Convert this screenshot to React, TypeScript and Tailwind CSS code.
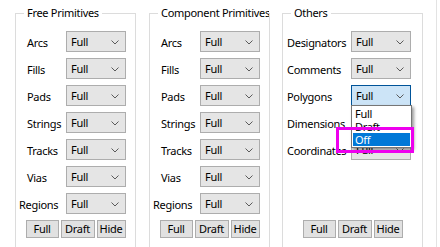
import React from "react";

function Chevron() {
  return (
    <svg width="8" height="5" viewBox="0 0 8 5" className="absolute right-[6px] top-[8px]">
      <path d="M0.5 0.5 L4 4 L7.5 0.5" fill="none" stroke="#5a5a5a" strokeWidth="1" />
    </svg>
  );
}

function Combo({ focused = false, children }: { focused?: boolean; children?: React.ReactNode }) {
  return (
    <div
      className={
        focused
          ? "relative w-[60px] h-[21px] border border-[#005499] bg-[#cce4f7] pl-[4px] leading-[19px] z-10"
          : "relative w-[60px] h-[21px] border border-[#adadad] bg-[#e5e5e5] pl-[4px] leading-[19px]"
      }
    >
      Full
      <Chevron />
      {children}
    </div>
  );
}

function Row({ label, labelCls, colW, focused, children }: { label: string; labelCls: string; colW: string; focused?: boolean; children?: React.ReactNode }) {
  return (
    <div className="flex items-center h-[21px]">
      <div className={`${colW} shrink-0 whitespace-nowrap pt-[3px] ${labelCls}`}>{label}</div>
      <Combo focused={focused}>{children}</Combo>
    </div>
  );
}

function Buttons() {
  return (
    <div className="flex justify-center gap-[2px] mt-[6px]">
      <div className="w-[33px] h-[18px] border border-[#adadad] bg-[#e1e1e1] text-center leading-[16px]">Full</div>
      <div className="w-[34px] h-[18px] border border-[#adadad] bg-[#e1e1e1] text-center leading-[16px]">Draft</div>
      <div className="w-[29px] h-[18px] border border-[#adadad] bg-[#e1e1e1] text-center leading-[16px]">Hide</div>
    </div>
  );
}

function GroupBox({ title, widthCls, children }: { title: string; widthCls: string; children: React.ReactNode }) {
  return (
    <div className={`relative shrink-0 h-[260px] border border-[#dcdcdc] ${widthCls}`}>
      <div className="absolute -top-[9px] left-[8px] right-0 overflow-hidden whitespace-nowrap leading-[16px]">
        <span className="bg-white px-[3px]">{title}</span>
      </div>
      <div className="pt-[17px]">{children}</div>
    </div>
  );
}

const prim = ["Arcs", "Fills", "Pads", "Strings", "Tracks", "Vias", "Regions"];

function PrimGroup({ title }: { title: string }) {
  return (
    <GroupBox title={title} widthCls="w-[121px]">
      <div className="h-[183px] flex flex-col gap-[6px]">
        {prim.map((p) => (
          <Row key={p} label={p} colW="w-[50px]" labelCls={p === "Regions" ? "pl-[3px]" : "pl-[11px]"} />
        ))}
      </div>
      <Buttons />
    </GroupBox>
  );
}

export default function App() {
  return (
    <div className="relative w-[440px] h-[247px] overflow-hidden bg-white text-black text-[11px] tracking-[-0.3px] font-['Noto_Sans',sans-serif]">
      <div className="w-[437px] h-[247px] border-r border-[#e3e3e3] flex pl-[15px] pt-[13px]">
        <PrimGroup title="Free Primitives" />
        <div className="w-[13px] shrink-0" />
        <PrimGroup title="Component Primitives" />
        <div className="w-[12px] shrink-0" />
        <GroupBox title="Others" widthCls="w-[141px]">
          <div className="h-[183px] flex flex-col gap-[6px]">
            <Row label="Designators" colW="w-[68px]" labelCls="pl-[4px]" />
            <Row label="Comments" colW="w-[68px]" labelCls="pl-[4px]" />
            <Row label="Polygons" colW="w-[68px]" labelCls="pl-[4px]" focused>
              <div className="absolute top-full -left-[1px] w-[61px] border border-[#767676] bg-white py-[1px] px-[1px] shadow-[2px_2px_3px_rgba(0,0,0,0.4)] leading-[13px]">
                <div className="h-[13px] pl-[2px]">Full</div>
                <div className="h-[13px] pl-[2px]">Draft</div>
                <div className="h-[13px] pl-[2px] bg-[#0078d7] text-white">Off</div>
              </div>
            </Row>
            <Row label="Dimensions" colW="w-[68px]" labelCls="pl-[4px]" />
            <Row label="Coordinates" colW="w-[68px]" labelCls="pl-[4px]" />
          </div>
          <Buttons />
        </GroupBox>
      </div>
      <div className="absolute left-[336px] top-[127px] w-[78px] h-[26px] border-[3px] border-[#ee00ee] z-20" />
    </div>
  );
}
